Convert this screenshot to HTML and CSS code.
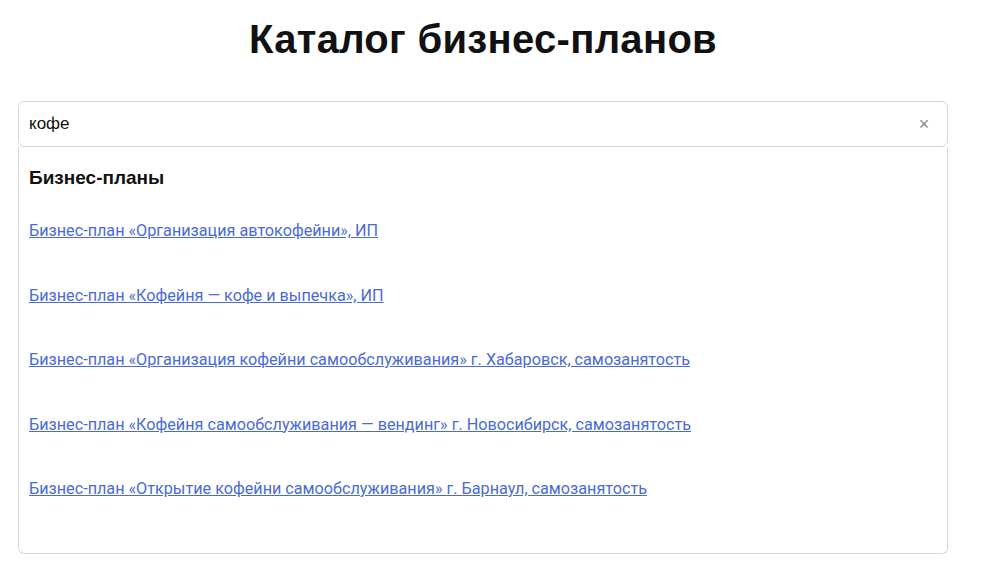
FILE: index.html
```html
<!DOCTYPE html>
<html lang="ru">
<head>
    <meta charset="UTF-8">
    <meta name="viewport" content="width=device-width, initial-scale=1.0">
    <title>Каталог бизнес-планов</title>
    <link rel="stylesheet" href="styles.css">
</head>
<body>

<div class="page">
    <h1>Каталог бизнес-планов</h1>

    <div class="search">
        <div class="search-box">
            <input type="text" class="search-input" value="кофе">
            <button class="search-clear" aria-label="Очистить">&times;</button>
        </div>

        <div class="results">
            <h2>Бизнес-планы</h2>
            <ul class="results-list">
                <li><a href="#">Бизнес-план «Организация автокофейни», ИП</a></li>
                <li><a href="#">Бизнес-план «Кофейня — кофе и выпечка», ИП</a></li>
                <li><a href="#">Бизнес-план «Организация кофейни самообслуживания» г. Хабаровск, самозанятость</a></li>
                <li><a href="#">Бизнес-план «Кофейня самообслуживания — вендинг» г. Новосибирск, самозанятость</a></li>
                <li><a href="#">Бизнес-план «Открытие кофейни самообслуживания» г. Барнаул, самозанятость</a></li>
            </ul>
        </div>
    </div>
</div>

</body>
</html>
```

FILE: styles.css
```css
body {
    margin: 0;
    background-color: #fff;
    color: #111;
    font-family: "Liberation Sans", Arial, sans-serif;
}

.page {
    padding: 16px 42px 0 18px;
}

.page h1 {
    margin: 0 0 39px;
    text-align: center;
    font-size: 40px;
    line-height: 46px;
    font-weight: 700;
    letter-spacing: 0.3px;
    color: #111;
}

.search {
    width: 930px;
}

.search-box {
    display: flex;
    align-items: center;
    height: 46px;
    border: 1px solid #d6d6d6;
    border-radius: 6px;
    box-sizing: border-box;
}

.search-input {
    flex: 1;
    border: none;
    outline: none;
    padding: 0 10px;
    font-family: "Liberation Sans", Arial, sans-serif;
    font-size: 17px;
    color: #111;
    background: transparent;
}

.search-clear {
    width: 40px;
    border: none;
    background: none;
    color: #888;
    font-size: 18px;
    cursor: pointer;
    padding: 0 6px 0 0;
}

.results {
    border: 1px solid #d6d6d6;
    border-top: none;
    border-radius: 0 0 6px 6px;
    height: 407px;
    box-sizing: border-box;
    padding: 19px 10px 0;
}

.results h2 {
    margin: 0 0 31px;
    font-size: 19px;
    line-height: 24px;
    font-weight: 700;
}

.results-list {
    list-style: none;
    margin: 0;
    padding: 0;
}

.results-list li {
    height: 64.5px;
}

.results-list a {
    font-family: Roboto, "Liberation Sans", sans-serif;
    font-size: 16.2px;
    line-height: 20px;
    color: #4a6bd6;
    text-decoration: underline;
}
```
